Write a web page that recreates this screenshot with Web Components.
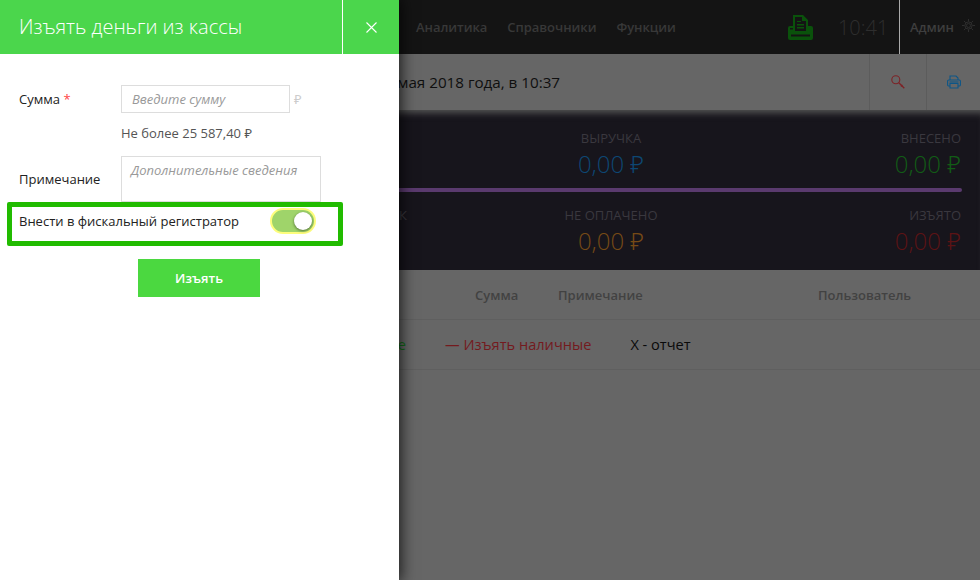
<!DOCTYPE html>
<html lang="ru"><head><meta charset="utf-8"><title>Касса</title>
<style>
html,body{margin:0;height:100%;overflow:hidden;background:#666}
body{font-family:"Open Sans","Noto Sans",sans-serif;font-size:13px;color:#111;width:980px;height:580px;position:relative}
</style></head><body>
<x-app>
  <x-topbar></x-topbar>
  <x-subbar>мая 2018 года, в 10:37</x-subbar>
  <x-stats>
    <x-stat slot="r1c3" label="ВЫРУЧКА" color="#0d4773" align="center"></x-stat>
    <x-stat slot="r1c4" label="ВНЕСЕНО" color="#125c16" align="right"></x-stat>
    <x-stat slot="r2c2" label="ЧЕК" align="right" nolabelvalue></x-stat>
    <x-stat slot="r2c3" label="НЕ ОПЛАЧЕНО" color="#764a16" align="center"></x-stat>
    <x-stat slot="r2c4" label="ИЗЪЯТО" color="#5c1315" align="right"></x-stat>
  </x-stats>
  <x-table></x-table>
</x-app>
<x-drawer heading="Изъять деньги из кассы">
  <x-field label="Сумма" required>
    <x-input placeholder="Введите сумму" suffix="₽"></x-input>
  </x-field>
  <x-hint>Не более 25 587,40 ₽</x-hint>
  <x-field label="Примечание">
    <x-input placeholder="Дополнительные сведения" multiline></x-input>
  </x-field>
  <x-fiscal>Внести в фискальный регистратор</x-fiscal>
  <x-action>Изъять</x-action>
</x-drawer>
<script>
function def(name,html){
  customElements.define(name,class extends HTMLElement{
    connectedCallback(){
      if(this.shadowRoot)return;
      const r=this.attachShadow({mode:'open'});
      r.innerHTML=typeof html==='function'?html(this):html;
    }
  });
}
def('x-app',`<style>:host{display:flex;flex-direction:column;width:980px;height:580px;overflow:hidden}</style><slot></slot>`);
def('x-topbar',`<style>
:host{display:flex;align-items:center;height:54px;background:#141414;flex:none;color:#383838;font-weight:600;font-size:13px}
nav{display:flex;gap:20px;margin-left:416px;letter-spacing:-.04px}
.pr{margin-left:112px;display:block}
.time{margin-left:25px;font-weight:300;font-size:20px;color:#2e2e2e;width:49px}
.user{margin-left:12px;align-self:stretch;border-left:1px solid #aaa;display:flex;align-items:center;padding-left:10px;color:#3e3e3e;font-size:13px;gap:8px}
svg.g{display:block;margin-top:-4px}
</style>
<nav><span>Аналитика</span><span>Справочники</span><span>Функции</span></nav>
<svg class="pr" width="25" height="25" viewBox="0 0 25 25"><path fill="#0a520b" fill-rule="evenodd" d="M5 0h10l5 5v6h3a2 2 0 0 1 2 2v10a2 2 0 0 1-2 2H2a2 2 0 0 1-2-2V13a2 2 0 0 1 2-2h3V0zM7 2v14h11V6h-4V2H7zM9 6h4v1H9V6zm0 3h7v1.400H9V9zm0 3h7v1.400H9V12zM3 19.500v2h19v-2H3z"/><rect x="2" y="13" width="3" height="1.500" fill="#141414"/></svg>
<span class="time">10:41</span>
<div class="user"><span>Админ</span>
<svg class="g" width="13" height="13" viewBox="0 0 13 13" fill="none" stroke="#2e2e2e" stroke-width="1"><circle cx="6.500" cy="6.500" r="3.600"/><circle cx="6.500" cy="6.500" r="2"/><path d="M6.500 0v2.500M6.500 10.500V13M0 6.500h2.500M10.500 6.500H13M1.900 1.900l1.800 1.800M9.300 9.300l1.800 1.800M1.900 11.100l1.800-1.800M9.300 3.700l1.800-1.800"/></svg></div>`);
def('x-subbar',`<style>
:host{display:flex;align-items:stretch;height:56px;background:#666;flex:none;font-size:15.200px;color:#0f0f0f}
.t{width:560px;text-align:right;align-self:center;white-space:nowrap;line-height:56px}
.b{display:flex;align-items:center;justify-content:center;border-left:1px solid #5c5c5c}
.s{margin-left:309px;width:56px}.p{width:53px}
</style><div class="t"><slot></slot></div>
<div class="b s"><svg width="14" height="14" viewBox="0 0 14 14" fill="none" stroke="#7d2226" stroke-width="1.100"><circle cx="4.800" cy="4.800" r="4"/><path d="M7.800 7.800l5.500 5.500M10 11.500l1.500-1.500" stroke-width="1.300"/></svg></div>
<div class="b p"><svg width="14" height="14" viewBox="0 0 14 14" fill="none" stroke="#0c5688" stroke-width="1.100"><path d="M3 5V1h6l2 2v2M3 11H1.500A1 1 0 0 1 .6 10V6a1 1 0 0 1 1-1h10.800a1 1 0 0 1 1 1v4a1 1 0 0 1-.9 1H11"/><path d="M3 8.500h8V13H3z"/><path d="M2.500 7h9" /></svg></div>`);
def('x-stats',`<style>
:host{display:block;height:160px;flex:none;background:#17151c;box-sizing:border-box;padding:18px 19px 0 18px;box-shadow:inset 0 8px 7px -5px #555;}
.g{display:grid;grid-template-columns:389px 104px 200px 1fr}
.c2{grid-column:1}.c3{grid-column:3}.c4{grid-column:4}
.line{grid-column:1/-1;height:4px;border-radius:2px;background:#5a3a6e;margin:6px -1px 13px 0}
</style><div class="g">
<div class="c2"><slot name="r1c2"></slot></div><div class="c3"><slot name="r1c3"></slot></div><div class="c4"><slot name="r1c4"></slot></div>
<div class="line"></div>
<div class="c2"><slot name="r2c2"></slot></div><div class="c3"><slot name="r2c3"></slot></div><div class="c4"><slot name="r2c4"></slot></div>
</div>`);
def('x-stat',h=>`<style>
:host{display:block;text-align:${h.getAttribute('align')}}
.l{font-size:13px;line-height:20px;color:#3a383f}
.v{font-size:24px;font-weight:300;line-height:32px;height:34px;white-space:nowrap;color:${h.getAttribute('color')||'transparent'}}
</style><div class="l">${h.getAttribute('label')}</div>${h.getAttribute('color')?`<div class="v">0,00 ₽</div>`:`<div class="v"></div>`}`);
def('x-table',`<style>
:host{display:block;flex:1;background:#666;font-size:14.600px}
.h{display:flex;height:49px;align-items:center;border-bottom:1px solid #5f5f5f;padding-left:475px;font-size:13px;font-weight:600;color:#424242}
.h span:nth-child(1){width:83px}.h span:nth-child(2){width:260px}
.r{display:grid;grid-template-columns:406px auto auto;justify-content:start;column-gap:39px;height:49px;align-items:center;border-bottom:1px solid #5f5f5f}
.r span{margin-bottom:2px}
.a{justify-self:end;color:#136a18;white-space:nowrap}.b{color:#741a1e;white-space:nowrap}.c{color:#0a0a0a}
</style><div class="h"><span>Сумма</span><span>Примечание</span><span>Пользователь</span></div>
<div class="r"><span class="a">Внести наличные</span><span class="b">— Изъять наличные</span><span class="c">X - отчет</span></div>`);
def('x-drawer',h=>`<style>
:host{position:absolute;z-index:5;left:0;top:0;width:399px;height:580px;background:#fff;box-shadow:0 0 14px 2px rgba(0,0,0,.75);display:flex;flex-direction:column;color:#222}
header{display:flex;height:54px;background:#4bd64c;color:#fff;flex:none}
h1{margin:0;flex:none;width:342px;padding-left:19px;box-sizing:border-box;font-size:20px;font-weight:300;line-height:54px;white-space:nowrap}
.x{flex:1;border-left:1px solid #fff;display:flex;align-items:center;justify-content:center}
.body{padding:31px 0 0 19px;display:flex;flex-direction:column;align-items:flex-start}
</style><header><h1>${h.getAttribute('heading')}</h1><div class="x"><svg width="11" height="11" viewBox="0 0 11 11" stroke="#fff" stroke-width="1.100"><path d="M.5.5l10 10M10.500.5l-10 10"/></svg></div></header><div class="body"><slot></slot></div>`);
def('x-field',h=>`<style>
:host{display:flex;align-items:center}
label{width:102px;flex:none;font-size:13px;color:#222}
b{color:#f44;font-weight:400}
</style><label>${h.getAttribute('label')}${h.hasAttribute('required')?' <b>*</b>':''}</label><slot></slot>`);
def('x-input',h=>{const m=h.hasAttribute('multiline');return `<style>
:host{display:flex;gap:4px;align-items:center}
.i{box-sizing:border-box;border:1px solid #ddd;width:${m?200:169}px;height:${m?46:28}px;padding:${m?'3px 9px':'0 10px'};line-height:${m?'20px':'26px'};font-size:13px;font-style:italic;color:#999;white-space:nowrap}
.s{font-size:13px;color:#ccc}
</style><div class="i">${h.getAttribute('placeholder')}</div>${h.hasAttribute('suffix')?`<span class="s">${h.getAttribute('suffix')}</span>`:''}`});
def('x-hint',`<style>:host{display:block;margin:10px 0 13px 102px;font-size:13px;line-height:20px;color:#555;white-space:nowrap}</style><slot></slot>`);
def('x-fiscal',`<style>
:host{display:flex;align-items:center;box-sizing:border-box;width:336px;height:44px;margin-left:-12px;border:5px solid #21bb00;border-radius:2px;padding-left:7px;font-size:13px;color:#222}
.t{flex:none;width:251px;white-space:nowrap;margin-top:-7px}
.sw{flex:none;box-sizing:border-box;width:46px;height:26px;border-radius:13px;background:#9fd46a;border:2.500px solid #fdfd7c;display:flex;align-items:center;justify-content:flex-end;padding-right:2px;margin-top:-6px}
.k{width:18px;height:18px;border-radius:50%;background:#fff;box-shadow:0 1px 3px rgba(0,0,0,.5)}
</style><span class="t"><slot></slot></span><span class="sw"><span class="k"></span></span>`);
def('x-action',`<style>:host{display:flex;align-items:center;justify-content:center;width:122px;height:38px;margin:13px 0 0 119px;background:#4bd840;color:#fff;font-size:13px;font-weight:600}</style><slot></slot>`);
</script>
</body></html>
